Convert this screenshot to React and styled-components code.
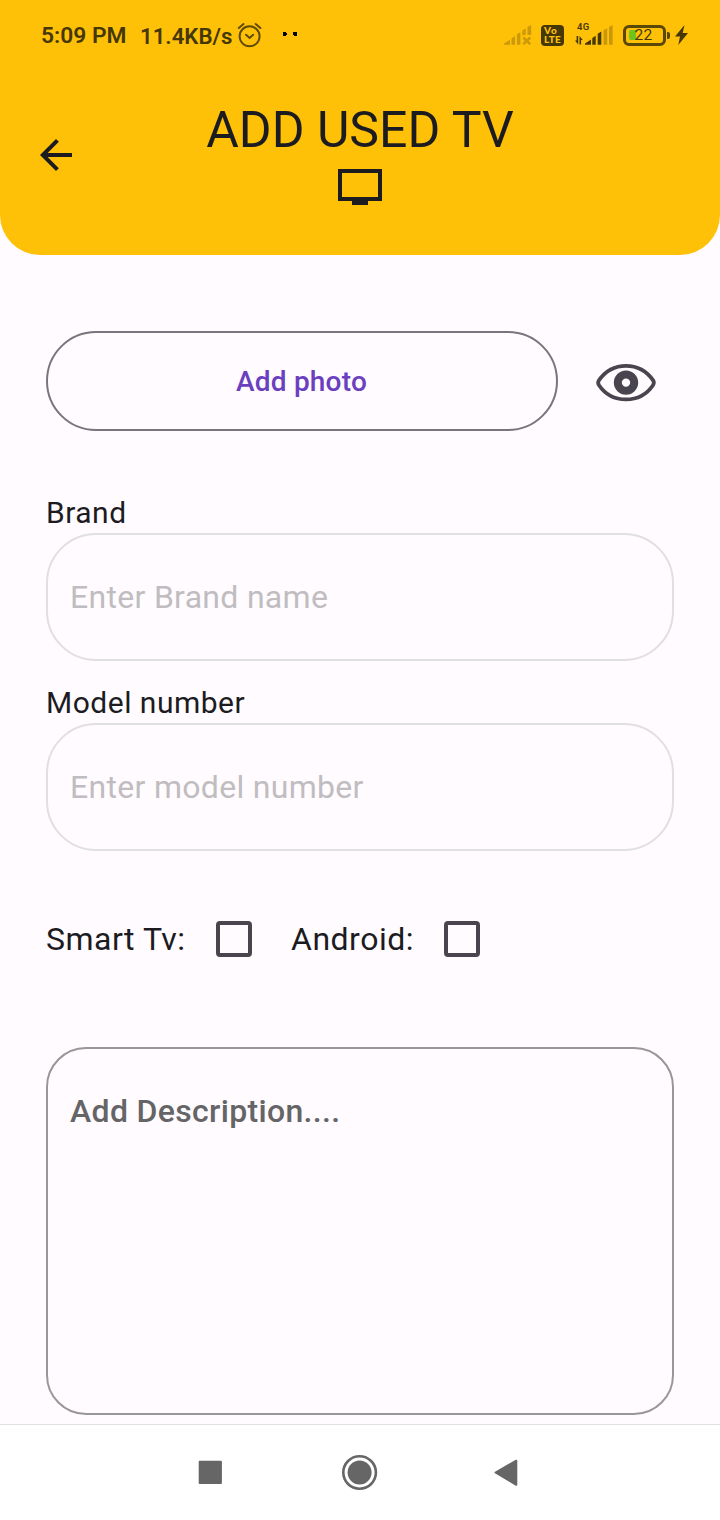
import React from "react";
import styled, { createGlobalStyle } from "styled-components";

const GlobalStyle = createGlobalStyle`
  * { box-sizing: border-box; }
  body { margin: 0; background: #fffbff; font-family: Roboto, sans-serif; }
  svg { display: block; flex: none; }
`;

const Screen = styled.div`
  width: 720px;
  height: 1520px;
  display: flex;
  flex-direction: column;
  background: #fffbff;
  color: #1c1b1f;
  overflow: hidden;
`;

const Header = styled.header`
  height: 255px;
  flex: none;
  background: #ffc107;
  border-radius: 0 0 40px 40px;
`;

const StatusBar = styled.div`
  height: 70px;
  display: flex;
  align-items: center;
  justify-content: space-between;
  padding: 0 32px 0 41px;
  color: #463706;
`;

const StatusGroup = styled.div`
  display: flex;
  align-items: center;
`;

const StatusText = styled.span`
  font-size: ${(p) => p.$size}px;
  line-height: 28px;
  padding-top: ${(p) => p.$drop}px;
  font-weight: 600;
  white-space: nowrap;
  width: ${(p) => p.$width}px;
`;

const TitleBar = styled.div`
  display: grid;
  grid-template-columns: 80px 1fr 80px;
  padding: 31px 32px 0 32px;
`;

const BackButton = styled.button`
  width: 48px;
  height: 48px;
  margin-top: 30px;
  padding: 0;
  border: 0;
  background: none;
  color: inherit;
`;

const TitleStack = styled.div`
  display: flex;
  flex-direction: column;
  align-items: center;
`;

const Title = styled.h1`
  margin: 0 0 4px;
  font-size: 50px;
  font-weight: 400;
  line-height: 58px;
  white-space: nowrap;
`;

const Form = styled.main`
  flex: 1;
  padding: 76px 46px 0;
`;

const PhotoRow = styled.div`
  display: flex;
  align-items: center;
  gap: 36px;
  margin-bottom: 64px;
`;

const PhotoButton = styled.button`
  width: 512px;
  height: 100px;
  border: 2px solid #79747e;
  border-radius: 50px;
  background: none;
  padding: 2px 1px 0 0;
  font: 500 28px/34px Roboto, sans-serif;
  letter-spacing: 0.2px;
  color: #6a40bf;
`;

const Field = styled.label`
  display: block;
  margin-bottom: ${(p) => p.$gap}px;
`;

const FieldLabel = styled.span`
  display: block;
  height: 38px;
  font-size: 30px;
  line-height: 36px;
  letter-spacing: 0.5px;
`;

const TextInput = styled.input`
  display: block;
  width: 628px;
  height: 128px;
  border: 2px solid #e0dfe1;
  border-radius: 50px;
  background: none;
  outline: none;
  padding: 0 22px;
  font: 400 32px/38px Roboto, sans-serif;
  letter-spacing: 0.3px;
  &::placeholder { color: #bfbdbf; opacity: 1; }
`;

const CheckRow = styled.div`
  display: flex;
  align-items: center;
  height: 36px;
  margin-bottom: 90px;
`;

const CheckLabel = styled.span`
  font-size: 32px;
  line-height: 38px;
  letter-spacing: 0.5px;
  white-space: nowrap;
  width: ${(p) => p.$width}px;
`;

const CheckBox = styled.input`
  appearance: none;
  flex: none;
  width: 36px;
  height: 36px;
  margin: 0 39px 0 0;
  border: 4px solid #49454f;
  border-radius: 4px;
`;

const Description = styled.textarea`
  display: block;
  width: 628px;
  height: 368px;
  border: 2px solid #979799;
  border-radius: 40px;
  background: none;
  resize: none;
  outline: none;
  padding: 43px 22px;
  font: 500 32px/38px Roboto, sans-serif;
  letter-spacing: 0.33px;
  &::placeholder { color: #656466; opacity: 1; }
`;

const NavBar = styled.nav`
  height: 96px;
  flex: none;
  border-top: 1px solid #e2e0e3;
  background: #fff;
  display: flex;
  justify-content: space-between;
  padding: 27px 192px 0;
`;

const AlarmIcon = () => (
  <svg width="26" height="26" viewBox="-1.600 0 26 26" fill="none" stroke="#604c08" strokeWidth="2" strokeLinecap="round">
    <circle cx="12" cy="14.300" r="10" />
    <path d="M8.400 12.700l3.600 3.300 3.600-3.300M1.200 6l4.700-4M22.800 6l-4.700-4" />
  </svg>
);

const DotsIcon = () => (
  <svg width="16" height="8" viewBox="0 0 16 8" fill="#000">
    <path d="M1 1h3v1h1v2H4v1H1zM11 1h4v4h-3V4h-1z" />
  </svg>
);

const SignalOffIcon = () => (
  <svg width="28" height="20" viewBox="0 0 28 20" fill="#cc990a">
    <path d="M0 19.700v-1.200L6 14.700v5zM7.500 13.500L11 11v8.700H7.500zM12.900 9.200l3.500-2v12.500h-3.500zM18.300 5.500l3.500-2v6l-3.500 1zM23.500 2L27.200 0v10h-3.700z" />
    <path d="M19.300 12.500l7 6.700m0-6.700l-7 6.700" stroke="#cc990a" strokeWidth="2.600" />
  </svg>
);

const VolteBadge = styled.span`
  width: 23px;
  height: 21px;
  border-radius: 4px;
  background: #463706;
  color: #fec10a;
  display: flex;
  flex-direction: column;
  padding: 1px 0 0 3px;
  margin: 0 11px 0 9px;
  font: 900 10px/9px Lato, sans-serif;
`;

const VolteLine = styled.span`
  letter-spacing: ${(p) => p.$spacing}px;
`;

const Network = styled.div`
  position: relative;
  width: 37px;
  height: 20px;
`;

const NetworkLabel = styled.span`
  position: absolute;
  left: 2px;
  top: -3px;
  font-size: 9.500px;
  line-height: 10px;
  font-weight: 600;
  letter-spacing: 0.3px;
`;

const SignalIcon = () => (
  <svg width="38" height="20" viewBox="0 0 38 20" fill="#463706">
    <path d="M10 19.700v-1.200L16 14.500v5.200zM17.300 13l3.400-2.300v9h-3.400zM22.700 8.700l3.600-2.200v13.200h-3.600z" />
    <path d="M1.600 11h1.600v8.500L0 15.500h1.600zM4.500 19.500V11L7.800 15H6.100v4.500z" />
    <path d="M28.600 5.200l3.600-2v16.500h-3.600zM34 2L37.600 0v19.700H34z" fill="#c9970a" />
  </svg>
);

const Battery = styled.div`
  position: relative;
  width: 43px;
  height: 21px;
  margin-left: 11px;
  border: 3px solid #5b4706;
  border-radius: 6px;
  display: flex;
  align-items: center;
  font-size: 15.500px;
  line-height: 16px;
  &::after {
    content: "";
    position: absolute;
    right: -7px;
    top: 4px;
    width: 3px;
    height: 7px;
    border-radius: 0 2px 2px 0;
    background: #5b4706;
  }
`;

const BatteryLevel = styled.span`
  width: 7px;
  height: 10px;
  margin-left: 3px;
  border-radius: 2px 0 0 2px;
  background: #6fc31b;
`;

const BatteryValue = styled.span`
  margin-left: -1.500px;
  letter-spacing: 0.2px;
`;

const BoltIcon = styled.svg`
  margin-left: 9px;
`;

const BackIcon = () => (
  <svg width="48" height="48" viewBox="0 0 24 24" fill="currentColor">
    <path d="M20 11H7.830l5.590-5.590L12 4l-8 8 8 8 1.410-1.410L7.830 13H20v-2z" />
  </svg>
);

const TvIcon = () => (
  <svg width="48" height="48" viewBox="0 0 24 24" fill="currentColor" fillRule="evenodd">
    <path d="M1 3h22v16h-7v2H8v-2H1zM3 5v12h18V5z" />
  </svg>
);

const EyeIcon = () => (
  <svg width="64" height="42" viewBox="0 -.5 64 42" fill="none" stroke="#49454f">
    <path d="M5 19.700C11 11 20 5.300 32 5.300S53 11 59 19.700Q60.700 22.200 59 24.700C53 33.500 44 38.900 32 38.900S11 33.500 5 24.700Q3.300 22.200 5 19.700Z" strokeWidth="3.800" />
    <circle cx="32" cy="22.100" r="8.200" strokeWidth="8" />
  </svg>
);

const RecentIcon = () => (
  <svg width="36" height="41" viewBox="0 0 36 41" fill="#666">
    <rect x="6.700" y="8.700" width="23.200" height="23.200" rx="1" />
  </svg>
);

const HomeIcon = () => (
  <svg width="41" height="41" viewBox="0 0 41 41">
    <circle cx="19.600" cy="20.500" r="16.300" fill="none" stroke="#666" strokeWidth="2.600" />
    <circle cx="19.600" cy="20.500" r="12" fill="#666" />
  </svg>
);

const NavBackIcon = () => (
  <svg width="36" height="41" viewBox="0 0 36 41" fill="#666" stroke="#666" strokeWidth="2" strokeLinejoin="round">
    <path d="M3.500 20.500L24.300 8.700V32.800Z" />
  </svg>
);

export default function App() {
  return (
    <>
      <GlobalStyle />
      <Screen>
        <Header>
          <StatusBar>
            <StatusGroup>
              <StatusText $size={22.8} $width={99} $drop={2}>5:09 PM</StatusText>
              <StatusText $size={22.2} $width={96} $drop={1}>11.4KB/s</StatusText>
              <AlarmIcon />
              <StatusText $size={22} $width={20} $drop={0} />
              <DotsIcon />
            </StatusGroup>
            <StatusGroup>
              <SignalOffIcon />
              <VolteBadge>
                <VolteLine $spacing={0.9}>Vo</VolteLine>
                <VolteLine $spacing={0.3}>LTE</VolteLine>
              </VolteBadge>
              <Network>
                <NetworkLabel>4G</NetworkLabel>
                <SignalIcon />
              </Network>
              <Battery>
                <BatteryLevel />
                <BatteryValue>22</BatteryValue>
              </Battery>
              <BoltIcon width="13" height="20" viewBox="0 0 13 20" fill="#463706">
                <path d="M9.500 0L0 11.500h5L3.300 20 13 8H7.700z" />
              </BoltIcon>
            </StatusGroup>
          </StatusBar>
          <TitleBar>
            <BackButton aria-label="Back">
              <BackIcon />
            </BackButton>
            <TitleStack>
              <Title>ADD USED TV</Title>
              <TvIcon />
            </TitleStack>
          </TitleBar>
        </Header>
        <Form>
          <PhotoRow>
            <PhotoButton>Add photo</PhotoButton>
            <EyeIcon />
          </PhotoRow>
          <Field $gap={24}>
            <FieldLabel>Brand</FieldLabel>
            <TextInput placeholder="Enter Brand name" />
          </Field>
          <Field $gap={70}>
            <FieldLabel>Model number</FieldLabel>
            <TextInput placeholder="Enter model number" />
          </Field>
          <CheckRow>
            <CheckLabel $width={170}>Smart Tv:</CheckLabel>
            <CheckBox type="checkbox" aria-label="Smart Tv" />
            <CheckLabel $width={153}>Android:</CheckLabel>
            <CheckBox type="checkbox" aria-label="Android" />
          </CheckRow>
          <Description placeholder="Add Description...." />
        </Form>
        <NavBar>
          <RecentIcon />
          <HomeIcon />
          <NavBackIcon />
        </NavBar>
      </Screen>
    </>
  );
}
